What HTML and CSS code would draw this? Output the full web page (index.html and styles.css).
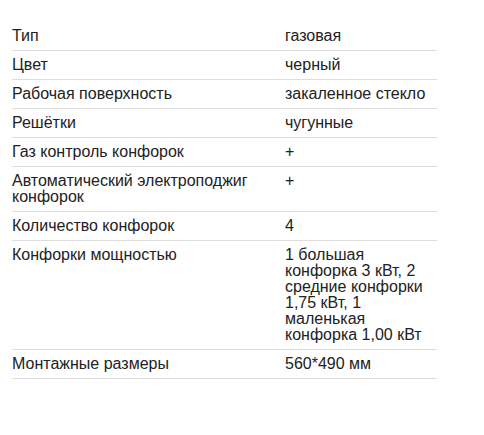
FILE: index.html
```html
<!DOCTYPE html>
<html lang="ru">
<head>
<meta charset="utf-8">
<link rel="stylesheet" href="styles.css">
</head>
<body>
<div class="wrap">
<table class="specs">
<tbody>
<tr><td class="k">Тип</td><td class="v">газовая</td></tr>
<tr><td class="k">Цвет</td><td class="v">черный</td></tr>
<tr><td class="k">Рабочая поверхность</td><td class="v">закаленное стекло</td></tr>
<tr><td class="k">Решётки</td><td class="v">чугунные</td></tr>
<tr><td class="k">Газ контроль конфорок</td><td class="v">+</td></tr>
<tr><td class="k">Автоматический электроподжиг конфорок</td><td class="v">+</td></tr>
<tr><td class="k">Количество конфорок</td><td class="v">4</td></tr>
<tr><td class="k">Конфорки мощностью</td><td class="v">1 большая конфорка 3 кВт, 2 средние конфорки 1,75 кВт, 1 маленькая конфорка 1,00 кВт</td></tr>
<tr><td class="k">Монтажные размеры</td><td class="v">560*490 мм</td></tr>
</tbody>
</table>
</div>
</body>
</html>
```
FILE: styles.css
```css
html, body {
  margin: 0;
  padding: 0;
  background: #fff;
}
.wrap {
  padding: 22px 0 0 12px;
}
.specs {
  border-collapse: collapse;
  table-layout: fixed;
  width: 425px;
  font-family: "Liberation Sans", Arial, sans-serif;
  font-size: 16px;
  line-height: 16px;
  color: #222;
}
.specs td {
  padding: 6px 0;
  border-bottom: 1px solid #ddd;
  vertical-align: top;
}
.specs .k {
  width: 263px;
  padding-right: 10px;
}
.specs .v {
  padding-right: 8px;
}
```
